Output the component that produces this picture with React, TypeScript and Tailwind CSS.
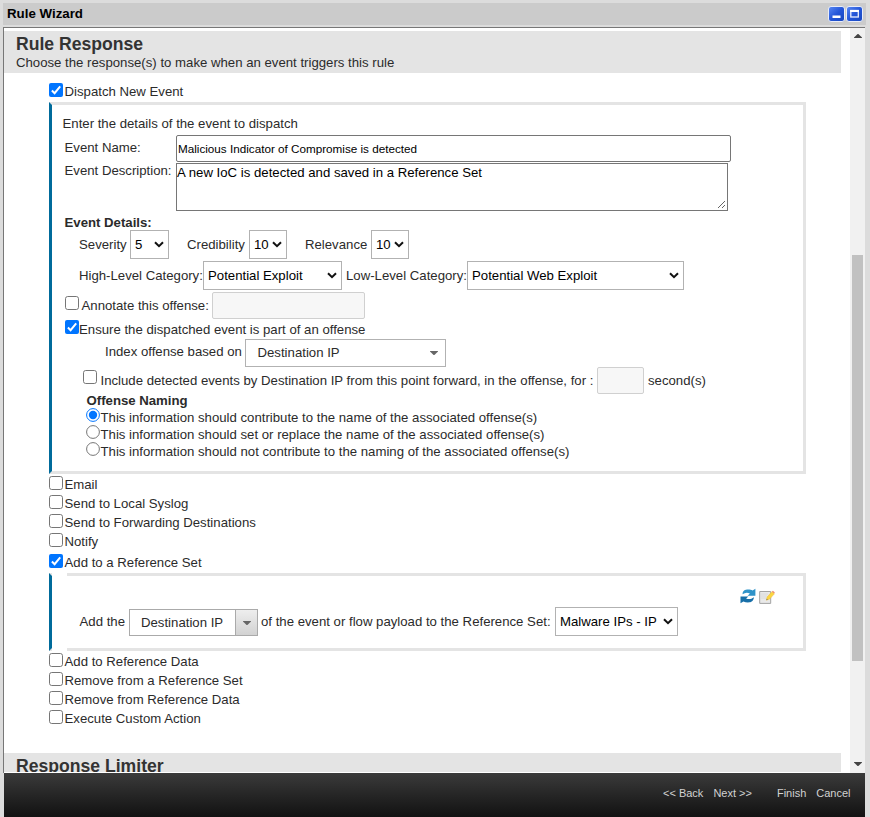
import React from "react";

function Check({ on = false, className = "" }: { on?: boolean; className?: string }) {
  return (
    <svg viewBox="0 0 14 14" className={`h-3.5 w-3.5 shrink-0 ${className}`}>
      {on ? (
        <>
          <rect width="14" height="14" rx="2" fill="#0075ff" />
          <path d="M2.9 7.5 5.6 10.2 11.2 3.4" fill="none" stroke="#fff" strokeWidth="2" />
        </>
      ) : (
        <rect x="0.5" y="0.5" width="13" height="13" rx="2.2" fill="#fff" stroke="#767676" />
      )}
    </svg>
  );
}

function Radio({ on = false }: { on?: boolean }) {
  return (
    <svg viewBox="0 0 14 14" className="h-3.5 w-3.5 shrink-0">
      <circle cx="7" cy="7" r="6.4" fill="#fff" stroke={on ? "#0075ff" : "#767676"} />
      {on && <circle cx="7" cy="7" r="4.2" fill="#0075ff" />}
    </svg>
  );
}

function Select({ value, className }: { value: string; className: string }) {
  return (
    <div className={`flex h-[29px] shrink-0 items-center justify-between border border-[#b2b2b2] bg-white pr-1 pl-1 text-black ${className}`}>
      <span>{value}</span>
      <svg viewBox="0 0 10 7" className="h-[7px] w-2.5">
        <path d="M1 1.2 5 5.2 9 1.2" fill="none" stroke="#111" strokeWidth="2" />
      </svg>
    </div>
  );
}

function Option({ label, on = false }: { label: string; on?: boolean }) {
  return (
    <label className="flex h-[19px] items-start pl-[45px]">
      <Check on={on} className="mt-px" />
      <span className="mt-[2px] ml-[1.5px]">{label}</span>
    </label>
  );
}

function Triangle() {
  return (
    <svg viewBox="0 0 8 4" className="h-1 w-2">
      <path d="M0 0h8v.4L4.4 4h-.8L0 .4z" fill="#666" />
    </svg>
  );
}

export default function App() {
  return (
    <div className="flex h-[817px] w-[870px] flex-col overflow-hidden bg-[#dcdcdc] pt-[3px] font-['Liberation_Sans',Arial,sans-serif] text-[13.2px] leading-4 whitespace-nowrap text-[#2b2b2b]">
      <header className="mr-1 ml-[3px] flex h-[22px] shrink-0 items-center bg-[#cbcbcb] pr-[3px] pl-1">
        <h1 className="grow text-[13.3px] font-bold text-black">Rule Wizard</h1>
        <svg viewBox="0 0 35 16" className="h-4 w-[35px]">
          <defs>
            <linearGradient id="blue" x1="0" y1="0" x2="1" y2="1">
              <stop offset="0" stopColor="#5a8af5" />
              <stop offset="0.5" stopColor="#2456d8" />
              <stop offset="1" stopColor="#1747bd" />
            </linearGradient>
          </defs>
          <rect x="0.5" y="0.5" width="16" height="15" rx="2.5" fill="url(#blue)" stroke="#e9edf8" />
          <rect x="4.5" y="9.5" width="8" height="2.5" fill="#fff" />
          <rect x="18.5" y="0.5" width="16" height="15" rx="2.5" fill="url(#blue)" stroke="#e9edf8" />
          <rect x="22.8" y="4.5" width="7.5" height="6.5" fill="none" stroke="#e9efff" strokeWidth="1.3" />
          <path d="M22.2 5h8.7" stroke="#fff" strokeWidth="2" />
        </svg>
      </header>

      <div className="mt-[2px] mr-[5px] ml-[3px] flex h-[746px] shrink-0 border-t border-l border-[#777] bg-white">
        <main className="h-[745px] w-[846px] shrink-0 overflow-hidden pt-[3px]">
          <section className="h-[42px] w-[837px] bg-[#e4e4e4] pt-[3px] pl-3">
            <h2 className="text-[17.6px] leading-5 font-bold text-[#333]">Rule Response</h2>
            <p className="pt-px">Choose the response(s) to make when an event triggers this rule</p>
          </section>

          <div className="h-[29px] pt-[9px]">
            <Option label="Dispatch New Event" on />
          </div>

          <section className="ml-[45px] h-[372px] w-[757px] border-3 border-[#e4e4e4] border-l-[#006b9b] pt-[11px]">
            <p className="h-[19px] pl-[10.5px]">Enter the details of the event to dispatch</p>
            <div className="flex h-7 pl-[12.5px]">
              <span className="w-[111.5px] pt-[5px]">Event Name:</span>
              <div className="flex h-[27px] w-[555px] items-center rounded-[2px] border border-[#767676] pt-px pl-[1px] text-[11.7px] text-black">
                Malicious Indicator of Compromise is detected
              </div>
            </div>
            <div className="flex h-[52px] pl-[12.5px]">
              <span className="w-[111.5px]">Event Description:</span>
              <div className="flex h-12 w-[552px] items-end justify-between border border-[#767676] text-black">
                <span className="self-start pt-[1px]">A new IoC is detected and saved in a Reference Set</span>
                <svg viewBox="0 0 9 9" className="mr-px mb-px h-[9px] w-[9px]">
                  <path d="M1 8 8 1M5 8 8 5" stroke="#666" />
                </svg>
              </div>
            </div>
            <p className="h-[15px] pl-[12.5px] font-bold">Event Details:</p>
            <div className="flex h-[31px] pl-[27px]">
              <span className="w-[51px] pt-[7px]">Severity</span>
              <Select value="5" className="w-[39px]" />
              <span className="ml-[18px] w-[62px] pt-[7px]">Credibility</span>
              <Select value="10" className="w-[38px]" />
              <span className="ml-[18px] w-[66px] pt-[7px]">Relevance</span>
              <Select value="10" className="w-[38px]" />
            </div>
            <div className="flex h-[31px] pl-[27px]">
              <span className="w-[124px] pt-[7px]">High-Level Category:</span>
              <Select value="Potential Exploit" className="w-[139px]" />
              <span className="ml-1 w-[121px] pt-[7px]">Low-Level Category:</span>
              <Select value="Potential Web Exploit" className="w-[217px]" />
            </div>
            <div className="flex h-7 pl-[13px]">
              <Check className="mt-1" />
              <span className="ml-[2.5px] w-[130.5px] pt-[6px]">Annotate this offense:</span>
              <div className="h-[27px] w-[153px] rounded-[2px] border border-[#d0d0d0] bg-[#f7f7f7]" />
            </div>
            <div className="flex h-[19px] pl-[13px]">
              <Check on />
              <span className="pt-[2px]">Ensure the dispatched event is part of an offense</span>
            </div>
            <div className="flex h-7 pl-[53px]">
              <span className="w-[140px] pt-[5px]">Index offense based on</span>
              <div className="flex h-7 w-[201px] items-center justify-between border border-[#b2b2b2] pr-[7px] pl-[11.5px]">
                <span>Destination IP</span>
                <Triangle />
              </div>
            </div>
            <div className="flex h-[26px] pl-[31px]">
              <Check className="mt-[3px]" />
              <span className="ml-[3.5px] w-[496.5px] pt-[6px]">
                Include detected events by Destination IP from this point forward, in the offense, for :
              </span>
              <div className="h-[27px] w-[47px] rounded-[2px] border border-[#d0d0d0] bg-[#f7f7f7]" />
              <span className="ml-1 pt-[6px]">second(s)</span>
            </div>
            <p className="h-[15px] pl-[34.5px] font-bold">Offense Naming</p>
            {[
              "This information should contribute to the name of the associated offense(s)",
              "This information should set or replace the name of the associated offense(s)",
              "This information should not contribute to the naming of the associated offense(s)",
            ].map((text, i) => (
              <label key={text} className="flex h-[17px] pl-[34px]">
                <Radio on={i === 0} />
                <span className="ml-[0.5px] pt-[2px]">{text}</span>
              </label>
            ))}
          </section>

          <div className="pt-px">
            <Option label="Email" />
            <Option label="Send to Local Syslog" />
            <Option label="Send to Forwarding Destinations" />
            <Option label="Notify" />
          </div>
          <div className="h-[22px] pt-[2px]">
            <Option label="Add to a Reference Set" on />
          </div>

          <section className="relative ml-[45px] h-[78px] w-[757px] border-3 border-[#e4e4e4] border-l-[#006b9b]">
            <div className="absolute -top-[3px] left-0 h-[3px] w-[15px] bg-white" />
            <div className="absolute -bottom-[3px] left-0 h-[3px] w-[15px] bg-white" />
            <div className="flex h-[31px] justify-end gap-[3px] pt-3 pr-7">
              <svg viewBox="0 0 16 16" className="h-4 w-4">
                <path d="M2.6 6.2C2.4 2.6 5 1.4 8.2 1.4c1.8 0 3.2.3 4.4 1L15.4.8v6.9H7.6l2.3-2.2c-2.6-1.3-5-.9-7.3.7Z" fill="#2f93c9" />
                <path d="M13.9 9.2c-.2 3.6-2.6 5.2-5.9 5.2-1.8 0-3.3-.3-4.6-1L.5 15.2V8.4h7.9L6.1 10.5c2.7 1.2 5.4.6 7.8-1.3Z" fill="#176fa8" />
              </svg>
              <svg viewBox="0 0 16 16" className="mt-px h-4 w-4">
                <path d="M.7 2.5h11v11.9H.7z" fill="#e9e9e9" stroke="#a3a3a3" />
                <path d="M2 5h7M2 7h6M2 9h5" stroke="#dadada" />
                <path d="m7.4 11.2.7-3.2 4.8-5.3 2.5 2.1-4.8 5.3Z" fill="#fbd63f" stroke="#eebb38" strokeWidth=".5" />
                <path d="m12.9 2.7 1-1 2 1.8-.9 1.1Z" fill="#f08c6c" />
                <path d="m7.4 11.2.5-1.4.8.7Z" fill="#555" />
              </svg>
            </div>
            <div className="flex pl-[27.5px]">
              <span className="w-[49.5px] pt-[7px]">Add the</span>
              <div className="mt-[2px] flex h-[27px] w-[129px] border border-[#aaa]">
                <span className="grow pt-[5px] pl-[11px]">Destination IP</span>
                <div className="flex w-[22px] items-center justify-center border-l border-[#aaa] bg-gradient-to-b from-[#eeeeee] to-[#d2d2d2]">
                  <Triangle />
                </div>
              </div>
              <span className="ml-[3px] w-[294px] pt-[7px]">of the event or flow payload to the Reference Set:</span>
              <Select value="Malware IPs - IP" className="w-[123px]" />
            </div>
          </section>

          <div className="h-[102px] pt-px">
            <Option label="Add to Reference Data" />
            <Option label="Remove from a Reference Set" />
            <Option label="Remove from Reference Data" />
            <Option label="Execute Custom Action" />
          </div>

          <section className="h-[19px] w-[837px] overflow-hidden bg-[#e4e4e4] pt-[3px] pl-3">
            <h2 className="text-[17.6px] leading-5 font-bold text-[#333]">Response Limiter</h2>
          </section>
        </main>

        <div className="flex w-[15px] shrink-0 flex-col items-center justify-between bg-[#f1f1f1] pt-[6px] pb-[7px]">
          <svg viewBox="0 0 8 4" className="h-1 w-2">
            <path d="M0 4h8v-.4L4.4 0h-.8L0 3.6z" fill="#444" />
          </svg>
          <div className="mt-[217px] mb-auto h-[406px] w-[11px] bg-[#c1c1c1]" />
          <svg viewBox="0 0 8 4" className="h-1 w-2">
            <path d="M0 0h8v.4L4.4 4h-.8L0 .4z" fill="#444" />
          </svg>
        </div>
      </div>

      <footer className="mr-[5px] ml-1 flex h-11 shrink-0 justify-end bg-gradient-to-b from-[#3b3b3b] to-[#121212] pt-3 pr-[14.5px] text-[11px] text-[#d2d2d2]">
        <span>&lt;&lt; Back</span>
        <span className="ml-[10px]">Next &gt;&gt;</span>
        <span className="ml-[25px]">Finish</span>
        <span className="ml-[10px]">Cancel</span>
      </footer>
    </div>
  );
}
